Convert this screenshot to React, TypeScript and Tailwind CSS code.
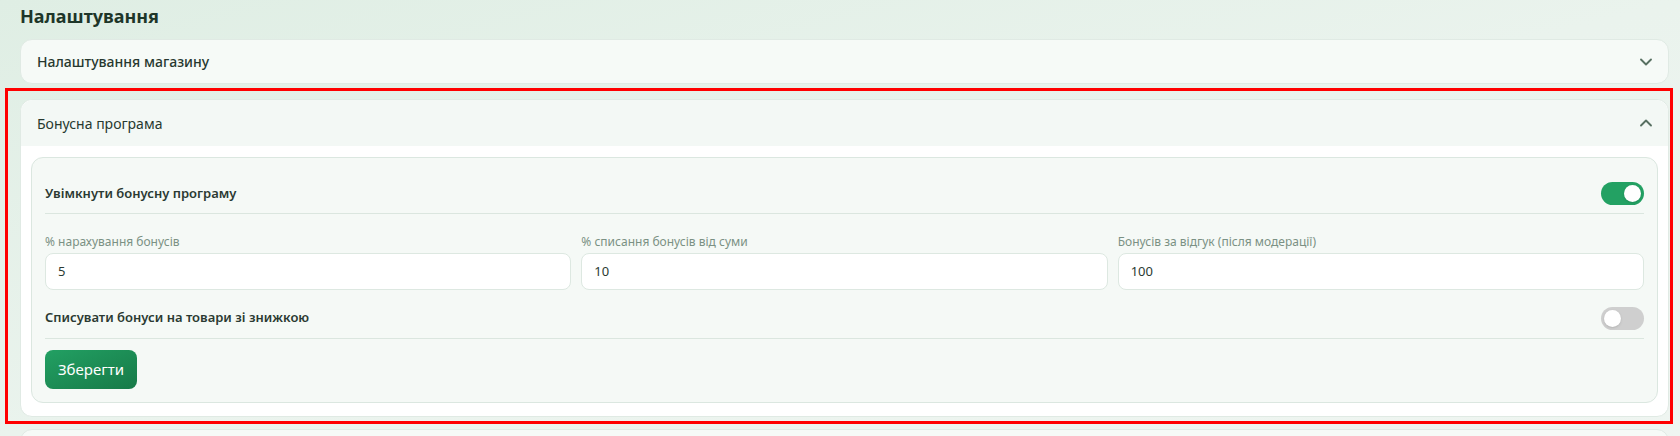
import { ChevronDown, ChevronUp } from 'lucide-react';

const FIELDS = [
  { label: '% нарахування бонусів', value: '5' },
  { label: '% списання бонусів від суми', value: '10' },
  { label: 'Бонусів за відгук (після модерації)', value: '100' },
];

const Toggle = ({ on }: { on: boolean }) => (
  <div
    className={`relative h-[23px] w-[43px] rounded-full ${on ? 'bg-[#23a163]' : 'bg-[#cfcfcf]'}`}
  >
    <div
      className={`absolute top-[3px] h-[17px] w-[17px] rounded-full bg-white shadow-sm ${on ? 'right-[3px]' : 'left-[3px]'}`}
    />
  </div>
);

export default function App() {
  return (
    <div
      className="h-[436px] w-full overflow-hidden bg-gradient-to-br from-[#dfeee4] via-[#eaf3ed] to-[#eff5f1] pl-5 pr-[11px] pt-[2px]"
      style={{ fontFamily: "'Noto Sans', 'Open Sans', sans-serif" }}
    >
      <h1 className="mb-[9px] text-[18px] font-bold leading-7 text-[#1e3629]">Налаштування</h1>

      {/* магазин */}
      <div className="flex h-[45px] items-center justify-between rounded-xl border border-[#e0eae4] bg-[#f6faf7] pl-4 pr-[12px]">
        <span className="text-[14px] font-medium text-[#27382f]">Налаштування магазину</span>
        <ChevronDown size={20} strokeWidth={2.25} className="text-[#587062]" />
      </div>

      {/* бонусна програма */}
      <div className="relative mt-[15px] rounded-xl border border-[#e0eae4] bg-white">
        <div className="flex h-[46px] items-center justify-between rounded-t-xl bg-[#f3f8f5] pl-4 pr-[12px]">
          <span className="text-[14px] text-[#27382f]">Бонусна програма</span>
          <ChevronUp size={20} strokeWidth={2.25} className="text-[#587062]" />
        </div>

        <div className="px-[10px] pb-[13px] pt-[11px]">
          <div className="rounded-xl border border-[#dbe7e0] bg-[#f5f9f6] px-[13px] pb-[13px] pt-4">
            <div className="flex h-[40px] items-center justify-between border-b border-[#dbe6df]">
              <span className="text-[13px] font-semibold text-[#2b3a32]">Увімкнути бонусну програму</span>
              <Toggle on />
            </div>

            <div className="mt-[20px] grid grid-cols-3 gap-[10px]">
              {FIELDS.map((f) => (
                <div key={f.label} className="flex flex-col">
                  <span className="mb-[3px] text-[12px] leading-4 text-[#7b9184]">{f.label}</span>
                  <div className="flex h-[37px] items-center rounded-lg border border-[#dde8e1] bg-white px-[12px] text-[13px] text-[#2b3a32]">
                    {f.value}
                  </div>
                </div>
              ))}
            </div>

            <div className="mt-[8px] flex h-[41px] items-center justify-between border-b border-[#dbe6df]">
              <span className="text-[13px] font-semibold text-[#2b3a32]">Списувати бонуси на товари зі знижкою</span>
              <Toggle on={false} />
            </div>

            <button className="mt-[11px] h-[39px] w-[92px] rounded-lg bg-gradient-to-br from-[#22a063] to-[#177a48] text-[15px] text-white">
              Зберегти
            </button>
          </div>
        </div>

        <div className="pointer-events-none absolute -bottom-[8px] -left-[16px] -right-[5px] -top-[12px] border-[3px] border-[#ff0000]" />
      </div>

      <div className="mt-[12px] h-[40px] rounded-xl border border-[#e0eae4] bg-[#f6faf7]" />
    </div>
  );
}
